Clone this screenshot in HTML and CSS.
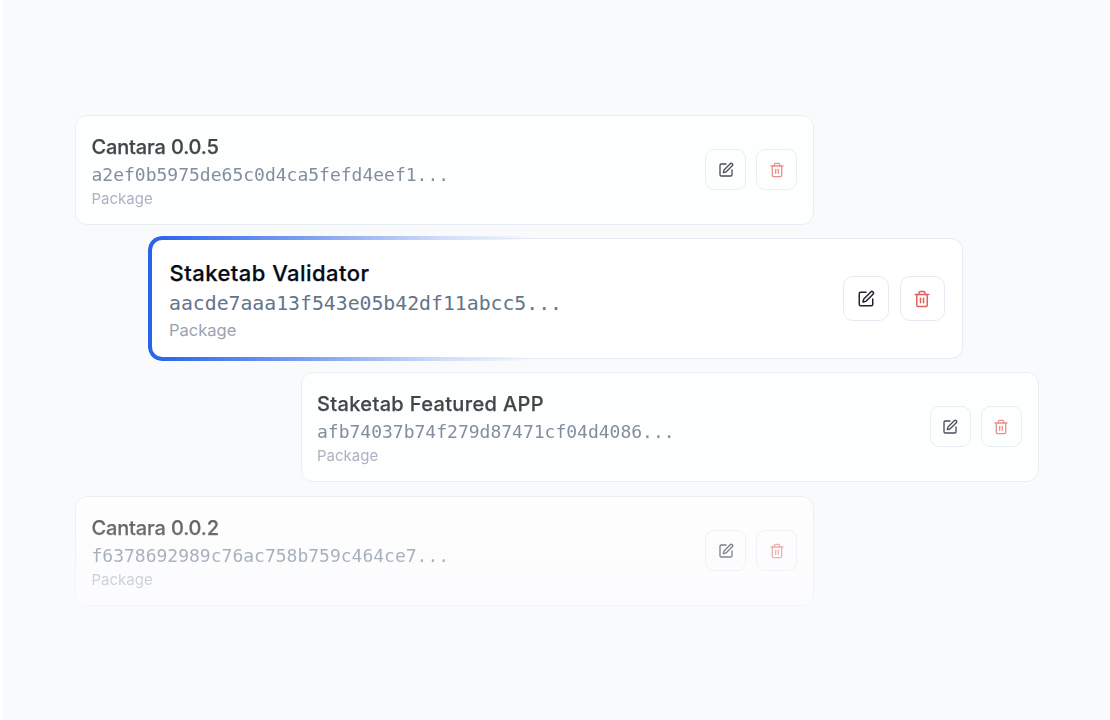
FILE: index.html
```html
<!DOCTYPE html>
<html lang="en">
<head>
    <meta charset="UTF-8">
    <meta name="viewport" content="width=device-width, initial-scale=1.0">
    <title>Packages</title>
    <link rel="stylesheet" href="styles.css">
</head>
<body>
    <div class="frame">
        <!-- Package cards -->
        <div class="card card-first">
            <div class="info">
                <div class="name">Cantara 0.0.5</div>
                <div class="hash">a2ef0b5975de65c0d4ca5fefd4eef1...</div>
                <div class="kind">Package</div>
            </div>
            <div class="actions">
                <button class="btn btn-edit">
                    <svg viewBox="0 0 24 24"><path d="M12 3H5a2 2 0 0 0-2 2v14a2 2 0 0 0 2 2h14a2 2 0 0 0 2-2v-7"/><path d="M18.375 2.625a1 1 0 0 1 3 3l-9.013 9.014a2 2 0 0 1-.853.505l-2.873.84a.5.5 0 0 1-.62-.62l.84-2.873a2 2 0 0 1 .506-.852z"/></svg>
                </button>
                <button class="btn btn-delete">
                    <svg viewBox="0 0 24 24"><path d="M3 6h18"/><path d="M19 6v14c0 1-1 2-2 2H7c-1 0-2-1-2-2V6"/><path d="M8 6V4c0-1 1-2 2-2h4c1 0 2 1 2 2v2"/><path d="M10 11v6"/><path d="M14 11v6"/></svg>
                </button>
            </div>
        </div>

        <div class="card card-active">
            <div class="info">
                <div class="name">Staketab Validator</div>
                <div class="hash">aacde7aaa13f543e05b42df11abcc5...</div>
                <div class="kind">Package</div>
            </div>
            <div class="actions">
                <button class="btn btn-edit">
                    <svg viewBox="0 0 24 24"><path d="M12 3H5a2 2 0 0 0-2 2v14a2 2 0 0 0 2 2h14a2 2 0 0 0 2-2v-7"/><path d="M18.375 2.625a1 1 0 0 1 3 3l-9.013 9.014a2 2 0 0 1-.853.505l-2.873.84a.5.5 0 0 1-.62-.62l.84-2.873a2 2 0 0 1 .506-.852z"/></svg>
                </button>
                <button class="btn btn-delete">
                    <svg viewBox="0 0 24 24"><path d="M3 6h18"/><path d="M19 6v14c0 1-1 2-2 2H7c-1 0-2-1-2-2V6"/><path d="M8 6V4c0-1 1-2 2-2h4c1 0 2 1 2 2v2"/><path d="M10 11v6"/><path d="M14 11v6"/></svg>
                </button>
            </div>
        </div>

        <div class="card card-third">
            <div class="info">
                <div class="name">Staketab Featured APP</div>
                <div class="hash">afb74037b74f279d87471cf04d4086...</div>
                <div class="kind">Package</div>
            </div>
            <div class="actions">
                <button class="btn btn-edit">
                    <svg viewBox="0 0 24 24"><path d="M12 3H5a2 2 0 0 0-2 2v14a2 2 0 0 0 2 2h14a2 2 0 0 0 2-2v-7"/><path d="M18.375 2.625a1 1 0 0 1 3 3l-9.013 9.014a2 2 0 0 1-.853.505l-2.873.84a.5.5 0 0 1-.62-.62l.84-2.873a2 2 0 0 1 .506-.852z"/></svg>
                </button>
                <button class="btn btn-delete">
                    <svg viewBox="0 0 24 24"><path d="M3 6h18"/><path d="M19 6v14c0 1-1 2-2 2H7c-1 0-2-1-2-2V6"/><path d="M8 6V4c0-1 1-2 2-2h4c1 0 2 1 2 2v2"/><path d="M10 11v6"/><path d="M14 11v6"/></svg>
                </button>
            </div>
        </div>

        <div class="card card-last">
            <div class="info">
                <div class="name">Cantara 0.0.2</div>
                <div class="hash">f6378692989c76ac758b759c464ce7...</div>
                <div class="kind">Package</div>
            </div>
            <div class="actions">
                <button class="btn btn-edit">
                    <svg viewBox="0 0 24 24"><path d="M12 3H5a2 2 0 0 0-2 2v14a2 2 0 0 0 2 2h14a2 2 0 0 0 2-2v-7"/><path d="M18.375 2.625a1 1 0 0 1 3 3l-9.013 9.014a2 2 0 0 1-.853.505l-2.873.84a.5.5 0 0 1-.62-.62l.84-2.873a2 2 0 0 1 .506-.852z"/></svg>
                </button>
                <button class="btn btn-delete">
                    <svg viewBox="0 0 24 24"><path d="M3 6h18"/><path d="M19 6v14c0 1-1 2-2 2H7c-1 0-2-1-2-2V6"/><path d="M8 6V4c0-1 1-2 2-2h4c1 0 2 1 2 2v2"/><path d="M10 11v6"/><path d="M14 11v6"/></svg>
                </button>
            </div>
        </div>
    </div>
</body>
</html>
```

FILE: styles.css
```css
/* Page */
body {
    margin: 0;
    height: 720px;
    overflow: hidden;
    background-color: #ffffff;
    font-family: Inter, Arial, sans-serif;
}
.frame {
    display: flex;
    flex-direction: column;
    align-items: flex-start;
    height: 720px;
    box-sizing: border-box;
    margin: 0 2px 0 3px;
    padding-top: 115px;
    background-color: #f9fafc;
}

/* Cards */
.card {
    display: flex;
    align-items: center;
    justify-content: space-between;
    box-sizing: border-box;
    width: 739px;
    height: 109.5px;
    padding: 0 16px 0 15.5px;
    background-color: white;
    border: 1px solid #e6ebf3;
    border-radius: 12px;
    opacity: 0.8;
}
.card-first {
    margin-left: 72px;
}
.card-active {
    position: relative;
    width: 814px;
    height: 121px;
    margin-left: 146px;
    margin-top: 13.5px;
    padding: 0 17px 0 19px;
    opacity: 1;
}
.card-third {
    width: 738px;
    margin-left: 297.5px;
    margin-top: 13px;
}
.card-last {
    margin-left: 72px;
    margin-top: 14.5px;
    opacity: 0.75;
    -webkit-mask-image: linear-gradient(#000, rgba(0, 0, 0, 0.5));
    mask-image: linear-gradient(#000, rgba(0, 0, 0, 0.5));
}

/* Blue edge that fades out along the top and bottom */
.card-active::before {
    content: "";
    position: absolute;
    top: -3px;
    left: -2px;
    right: -1px;
    bottom: -3px;
    box-sizing: border-box;
    border: 4px solid transparent;
    border-radius: 14px;
    background: linear-gradient(90deg, #2563eb 0, #7fa1f2 20%, #d0dcf8 36%, rgba(230, 236, 250, 0) 47%) border-box;
    -webkit-mask: linear-gradient(#000 0 0) padding-box, linear-gradient(#000 0 0) border-box;
    -webkit-mask-composite: xor;
    mask-composite: exclude;
}

/* Text */
.info {
    display: flex;
    flex-direction: column;
    padding-top: 2px;
}
.name {
    font-size: 20px;
    line-height: 28px;
    font-weight: 500;
    letter-spacing: -0.15px;
    -webkit-text-stroke: 0.25px currentColor;
    color: #15171c;
}
.hash {
    font-family: "DejaVu Sans Mono", monospace;
    font-size: 18px;
    line-height: 28px;
    color: #64748b;
}
.kind {
    margin-top: 1px;
    font-size: 15px;
    line-height: 18px;
    color: #98a2b3;
}
.card-active .name {
    margin-left: 0.5px;
    font-size: 22px;
    line-height: 30px;
    letter-spacing: 0.45px;
    color: #060b18;
}
.card-third .name {
    letter-spacing: 0.35px;
}
.card-active .hash {
    font-size: 19.8px;
    line-height: 32px;
}
.card-active .kind {
    margin-top: -1px;
    font-size: 16.5px;
    line-height: 22px;
}

/* Buttons */
.actions {
    display: flex;
    gap: 10px;
}
.btn {
    display: flex;
    align-items: center;
    justify-content: center;
    width: 41px;
    height: 41px;
    padding: 0;
    background-color: white;
    border: 1px solid #e6ebf3;
    border-radius: 9px;
}
.btn svg {
    width: 16px;
    height: 16px;
    fill: none;
    stroke-width: 2;
    stroke-linecap: round;
    stroke-linejoin: round;
}
.btn-edit svg {
    stroke: #1f2430;
}
.btn-delete svg {
    stroke: #e0605c;
    opacity: 0.85;
}
.card-active .actions {
    gap: 11px;
}
.card-active .btn {
    width: 45.5px;
    height: 45px;
    border-radius: 10px;
}
.card-active .btn svg {
    width: 18px;
    height: 18px;
}
.card-active .btn-delete svg {
    opacity: 1;
}
```
